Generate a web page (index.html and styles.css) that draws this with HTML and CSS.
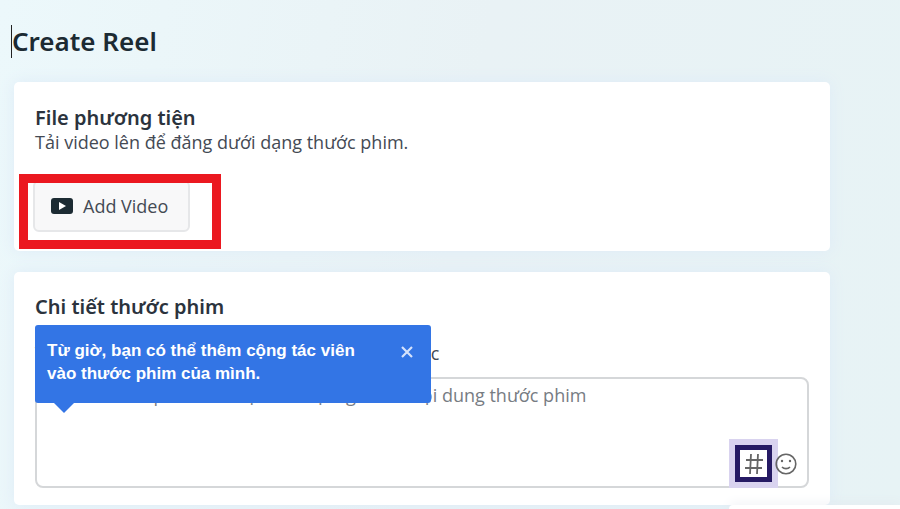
FILE: index.html
```html
<!DOCTYPE html>
<html lang="vi">
<head>
    <meta charset="UTF-8">
    <meta name="viewport" content="width=device-width, initial-scale=1.0">
    <title>Create Reel</title>
    <link rel="stylesheet" href="styles.css">
</head>
<body>
    <main class="page">
        <h1 class="title">Create Reel</h1>

        <section class="card media">
            <h2>File phương tiện</h2>
            <p>Tải video lên để đăng dưới dạng thước phim.</p>
            <div class="add-row">
                <button type="button" class="add-video">
                    <svg width="22" height="16" viewBox="0 0 22 16" aria-hidden="true">
                        <rect width="22" height="16" rx="3" fill="#1c2b33"/>
                        <path d="M8 4l7 4-7 4z" fill="#fff"/>
                    </svg>
                    Add Video
                </button>
                <div class="highlight"></div>
            </div>
        </section>

        <section class="card details">
            <h2>Chi tiết thước phim</h2>
            <div class="field">
                <label for="description">Thêm phần mô tả thước phim của bạn, bắt buộc</label>
                <div class="text-box">
                    <textarea id="description" placeholder="Mô tả thước phim của bạn để mọi người rõ nội dung thước phim"></textarea>
                    <div class="tools">
                        <button type="button" class="hashtag" aria-label="Hashtag">
                            <svg width="20" height="22" viewBox="0 0 20 22" fill="none" stroke="#666" stroke-width="1.8" aria-hidden="true">
                                <path d="M7 1L6 21M14 1l-1 20M2 7h17M1 15h17"/>
                            </svg>
                        </button>
                        <button type="button" class="emoji" aria-label="Emoji">
                            <svg width="22" height="22" viewBox="0 0 22 22" fill="none" stroke="#666" stroke-width="1.6" aria-hidden="true">
                                <circle cx="11" cy="11" r="9.8"/>
                                <path d="M7 14c2 2.2 6 2.2 8 0"/>
                                <circle cx="7" cy="8" r="1.2" fill="#666" stroke="none"/>
                                <circle cx="15" cy="8" r="1.2" fill="#666" stroke="none"/>
                            </svg>
                        </button>
                    </div>
                </div>
                <div class="tooltip" role="status">
                    <p>Từ giờ, bạn có thể thêm cộng tác viên vào thước phim của mình.</p>
                    <button type="button" class="close" aria-label="Close">
                        <svg width="12" height="12" viewBox="0 0 12 12" stroke="#d5e2fb" stroke-width="2.2" aria-hidden="true">
                            <path d="M1 1l10 10M11 1L1 11"/>
                        </svg>
                    </button>
                </div>
            </div>
        </section>
    </main>
    <footer class="footer"></footer>
</body>
</html>
```

FILE: styles.css
```css
* {
    box-sizing: border-box;
}

body {
    margin: 0;
    min-height: 100vh;
    overflow: hidden;
    font-family: "Open Sans", "Noto Sans", sans-serif;
    font-size: 18px;
    color: #444a54;
    background: linear-gradient(100deg, #ecf8fb 0%, #e9f2f5 50%, #e7f3f5 100%);
}

h1,
h2,
p {
    margin: 0;
}

button {
    font: inherit;
    color: inherit;
    padding: 0;
    border: none;
    background: none;
    cursor: pointer;
}

svg {
    display: block;
}

.page {
    padding: 25px 70px 0 11px;
}

.title {
    border-left: 1px solid #222;
    font-family: "Noto Sans", sans-serif;
    font-size: 26px;
    font-weight: 600;
    line-height: 33px;
    color: #1c2b33;
}

.card {
    margin: 0 0 21px 3px;
    padding: 24px 21px 0;
    border-radius: 5px;
    background: #fff;
    box-shadow: 0 0 16px #deebf7;
}

.card h2 {
    font-family: "Noto Sans", sans-serif;
    font-size: 20px;
    font-weight: 600;
    line-height: 24px;
    color: #2b333d;
}

.media {
    margin-top: 24px;
    padding-bottom: 19px;
}

.media p {
    line-height: 24px;
}

.add-row {
    position: relative;
    margin: 26px -2px 0;
}

.add-video {
    display: flex;
    align-items: center;
    gap: 10px;
    height: 52px;
    padding: 0 20px 0 16px;
    border: 2px solid #e6e7e9;
    border-radius: 6px;
    background: #f8f8f9;
}

.highlight {
    position: absolute;
    top: -6px;
    left: -14px;
    width: 202px;
    height: 75px;
    border: 9px solid #eb1820;
    pointer-events: none;
}

.details {
    margin-bottom: 0;
    padding-top: 23px;
    padding-bottom: 17px;
}

.field {
    position: relative;
    padding-top: 22px;
}

.field label {
    display: block;
    line-height: 24px;
    padding-bottom: 12px;
}

.text-box {
    position: relative;
}

.text-box textarea {
    display: block;
    width: 100%;
    height: 111px;
    padding: 3px 10px;
    border: 2px solid #d5d7d9;
    border-radius: 8px;
    background: #fff;
    font: inherit;
    line-height: 26px;
    resize: none;
}

.text-box textarea::placeholder {
    color: #777c83;
}

.tools {
    position: absolute;
    right: 12px;
    bottom: 0;
    display: flex;
    align-items: center;
    gap: 3px;
}

.hashtag {
    display: grid;
    place-items: center;
    width: 37px;
    height: 37px;
    margin: 6px 0;
    border: 5px solid #261a64;
    background: #fff;
    box-shadow: 0 0 0 6px #d9d3ef;
}

.emoji {
    position: relative;
}

.tooltip {
    position: absolute;
    top: 6px;
    left: 0;
    display: flex;
    justify-content: space-between;
    align-items: flex-start;
    width: 396px;
    height: 78px;
    padding: 14px 18px 0 12px;
    border-radius: 3px;
    background: #3375e5;
    color: #fff;
    font-family: "Liberation Sans", Arial, sans-serif;
    font-size: 17px;
    font-weight: bold;
    line-height: 23px;
}

.tooltip p {
    width: 330px;
}

.tooltip::after {
    content: "";
    position: absolute;
    top: 100%;
    left: 19px;
    border: 10px solid transparent;
    border-top-color: #3375e5;
    border-bottom: none;
}

.close {
    padding: 7px 0;
}

.footer {
    position: fixed;
    right: 0;
    bottom: 0;
    width: 19%;
    height: 4px;
    border-top-left-radius: 4px;
    background: #fff;
    box-shadow: 0 0 12px #dfe3ea;
}
```
